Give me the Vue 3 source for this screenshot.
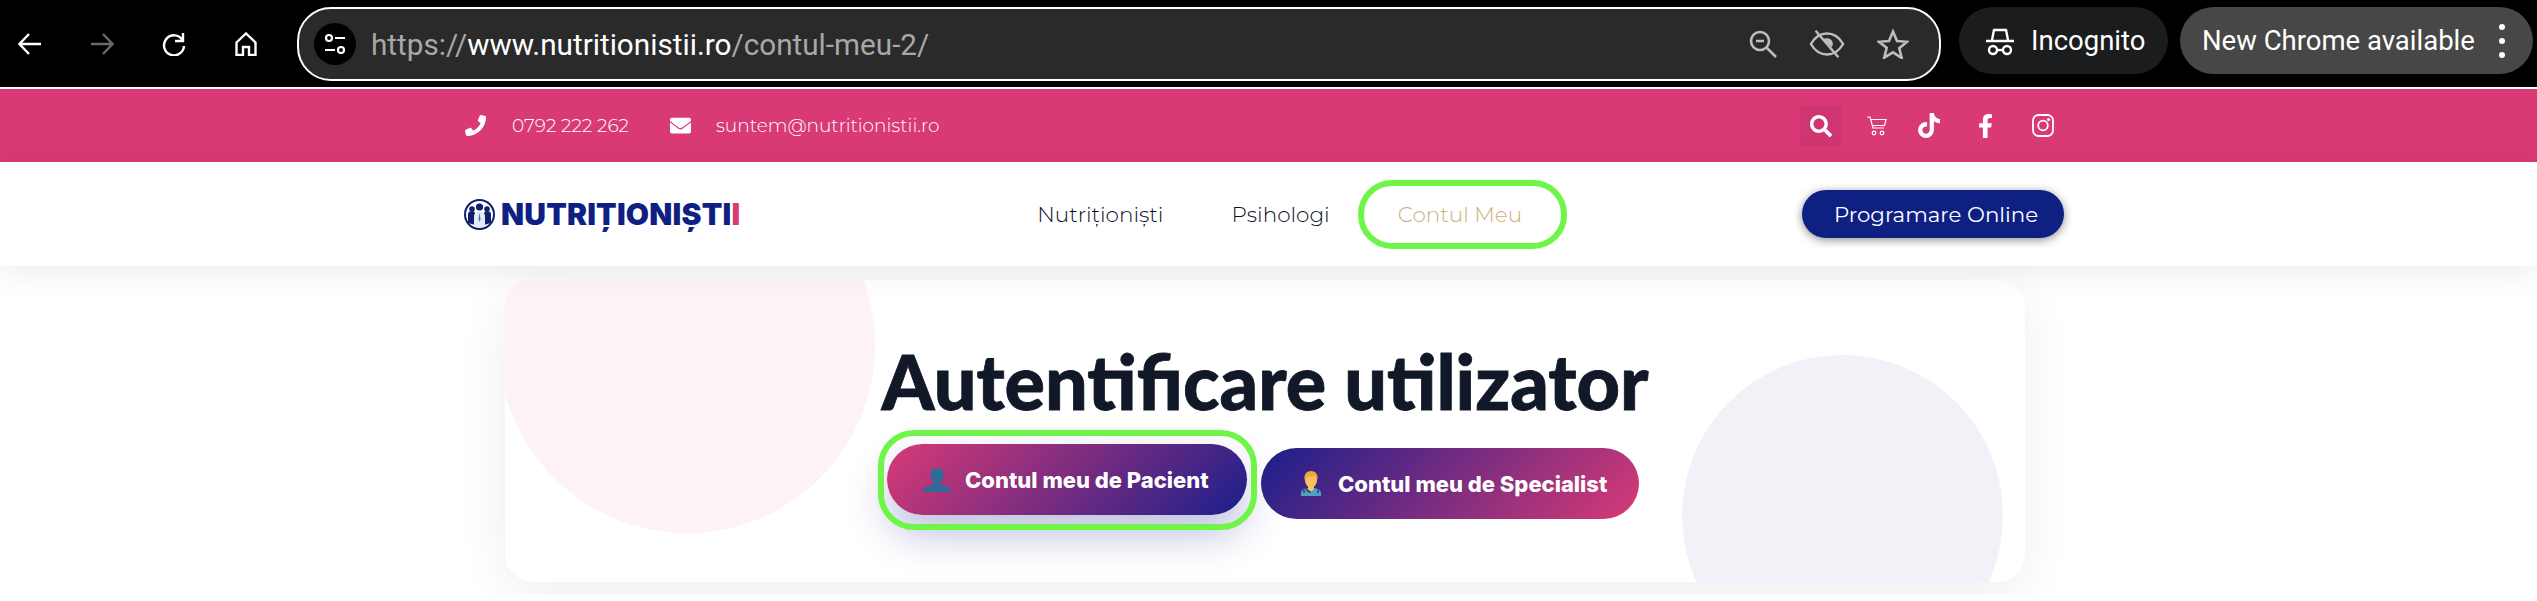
<script setup>
const urlHost = 'www.nutritionistii.ro'
const navLinks = ['Nutriționiști', 'Psihologi']
</script>

<template>
  <div class="page">
    <header class="browser">
      <div class="browser-nav">
        <svg class="bi" viewBox="0 0 24 24"><path d="M23 12H2M11 2 1.500 12 11 22" /></svg>
        <svg class="bi dim" viewBox="0 0 24 24"><path d="M1 12h21M13 2l9.500 10L13 22" /></svg>
        <svg class="bi" viewBox="0 0 24 24"><path d="M20.500 8A10 10 0 1 0 22 14M21 1v8h-8" /></svg>
        <svg class="bi" viewBox="0 0 24 24"><path d="M2.500 10.500 12 1.500l9.500 9V23H15v-8H9v8H2.500z" /></svg>
      </div>
      <div class="omnibox">
        <span class="site-btn">
          <svg width="24" height="24" viewBox="0 0 24 24" fill="none" stroke="#fff" stroke-width="2.200">
            <circle cx="6" cy="6" r="3" /><path d="M12 6h10M2 18h10" /><circle cx="18" cy="18" r="3" />
          </svg>
        </span>
        <span class="url">https://<b>{{ urlHost }}</b>/contul-meu-2/</span>
        <span class="omni-icons">
          <svg width="28" height="28" viewBox="0 0 28 28"><circle cx="11" cy="11" r="9" /><path d="M7 11h8M17.500 17.500 27 27" /></svg>
          <svg width="36" height="30" viewBox="0 0 38 30"><path d="M2 15c4-7 10-11 17-11s13 4 17 11c-4 7-10 11-17 11S6 22 2 15zM7 1l24 28" /><path class="eye-fill" d="M19 9a6 6 0 0 1 5 9.500L15 10c1-.7 2.500-1 4-1z" /></svg>
          <svg width="32" height="30" viewBox="0 0 32 30"><path d="m16 2.500 4 9.500 10 .8-7.700 6.500 2.400 9.700L16 23.300l-8.700 5.200 2.400-9.700L2 12.800l10-.8z" /></svg>
        </span>
      </div>
      <div class="chip incognito">
        <svg width="30" height="30" viewBox="0 0 30 30" fill="none" stroke="#fff" stroke-width="2.400">
          <path d="M1 15h28M7 14l2-10h12l2 10" /><circle cx="8" cy="24" r="4" /><circle cx="22" cy="24" r="4" /><path d="M12 24h6" />
        </svg>
        <span>Incognito</span>
      </div>
      <div class="chip update">
        <span>New Chrome available</span>
        <span class="dots"><i></i><i></i><i></i></span>
      </div>
    </header>

    <div class="topbar">
      <div class="wrap topbar-in">
        <div class="contact">
          <svg class="ci" viewBox="0 0 512 512"><path d="M493.400 24.600l-104-24c-11.300-2.600-22.900 3.300-27.500 13.900l-48 112c-4.200 9.800-1.400 21.300 6.900 28l60.600 49.600c-36 76.700-98.900 140.500-177.200 177.200l-49.600-60.600c-6.800-8.300-18.200-11.100-28-6.900l-112 48C3.900 366.500-2 378.100.6 389.400l24 104C27.100 504.200 36.700 512 48 512c256.100 0 464-207.500 464-464 0-11.200-7.700-20.900-18.600-23.400z" /></svg>
          <span class="phone">0792 222 262</span>
          <svg class="ci" viewBox="0 0 512 512"><path d="M502.300 190.800c3.900-3.100 9.700-.2 9.700 4.700V400c0 26.500-21.500 48-48 48H48c-26.500 0-48-21.500-48-48V195.600c0-5 5.700-7.800 9.700-4.700 22.400 17.400 52.100 39.500 154.100 113.600 21.100 15.400 56.700 47.800 92.200 47.600 35.700.3 72-32.800 92.300-47.600 102-74.100 131.600-96.300 154-113.700zM256 320c23.200.4 56.600-29.200 73.400-41.400 132.700-96.300 142.800-104.700 173.400-128.700 5.800-4.500 9.200-11.500 9.200-18.900v-19c0-26.500-21.500-48-48-48H48C21.500 64 0 85.500 0 112v19c0 7.400 3.400 14.300 9.200 18.900 30.600 23.900 40.700 32.400 173.400 128.700 16.800 12.200 50.200 41.800 73.400 41.400z" /></svg>
          <span class="mail">suntem@nutritionistii.ro</span>
        </div>
        <div class="socials">
          <span class="search">
            <svg width="22" height="22" viewBox="0 0 512 512" fill="#fff"><path d="M505 442.700L405.300 343c-4.500-4.500-10.600-7-17-7H372c27.600-35.300 44-79.700 44-128C416 93.100 322.900 0 208 0S0 93.100 0 208s93.100 208 208 208c48.300 0 92.700-16.400 128-44v16.300c0 6.400 2.500 12.500 7 17l99.700 99.700c9.400 9.400 24.600 9.400 33.900 0l28.300-28.300c9.400-9.400 9.400-24.600.1-34zM208 336c-70.700 0-128-57.200-128-128 0-70.700 57.200-128 128-128 70.700 0 128 57.200 128 128 0 70.700-57.200 128-128 128z" /></svg>
          </span>
          <svg class="cart" width="20" height="20" viewBox="0 0 20 20" fill="none" stroke="#fff" stroke-width="1.200">
            <path d="M0 1h3l3 11h11M4 3.500h15l-1.500 6H5.500" /><circle cx="7" cy="17" r="1.800" /><circle cx="15" cy="17" r="1.800" />
          </svg>
          <svg class="tiktok" width="22" height="25" viewBox="0 0 448 512" fill="#fff"><path d="M448 209.910a210.060 210.060 0 0 1-122.770-39.250V349.380A162.550 162.550 0 1 1 185 188.310V278.200a74.620 74.620 0 1 0 52.230 71.180V0l88 0a121.180 121.180 0 0 0 1.860 22.170h0A122.180 122.180 0 0 0 381 102.390a121.430 121.430 0 0 0 67 20.140Z" /></svg>
          <svg class="fb" width="15" height="24" viewBox="0 0 320 512" fill="#fff"><path d="M279.140 288l14.220-92.660h-88.910v-60.130c0-25.350 12.420-50.060 52.240-50.060h40.420V6.260S260.430 0 225.360 0c-73.220 0-121.080 44.380-121.080 124.720v70.620H22.890V288h81.390v224h100.170V288z" /></svg>
          <svg class="insta" width="22" height="23" viewBox="0 0 22 23" fill="none" stroke="#fff" stroke-width="1.800">
            <rect x="1" y="1" width="20" height="21" rx="5.500" /><circle cx="11" cy="11.500" r="4.800" /><circle cx="16.500" cy="5.500" r=".6" fill="#fff" />
          </svg>
        </div>
      </div>
    </div>

    <div class="mainbar">
      <div class="wrap mainbar-in">
        <div class="logo">
          <svg width="31" height="31" viewBox="0 0 31 31">
            <circle cx="15.500" cy="15.500" r="14.500" fill="#fff" stroke="#101f6e" stroke-width="2" />
            <g fill="#101f6e">
              <circle cx="8" cy="10" r="2.800" /><circle cx="23" cy="10" r="2.800" />
              <path d="M4 24V15c0-2 2-3 4-3s3 1 3 3v11zM20 26V15c0-2 1-3 3-3s4 1 4 3v9z" />
              <circle cx="15.500" cy="8" r="3.600" />
            </g>
            <path d="M10 28V17c0-2 2-4 5.500-4s5.500 2 5.500 4v11z" fill="#e6ecf5" />
            <path d="M15.500 13.500 14.500 20l1 3 1-3z" fill="#2a7fd0" />
          </svg>
          <span class="logo-text">NUTRIȚIONIȘTI<em>I</em></span>
        </div>
        <nav class="links">
          <a v-for="link in navLinks" :key="link">{{ link }}</a>
          <a class="current">Contul Meu</a>
        </nav>
        <a class="cta">Programare Online</a>
      </div>
    </div>

    <main class="content">
      <section class="card">
        <span class="blob pink"></span>
        <span class="blob grey"></span>
        <h1>Autentificare utilizator</h1>
        <div class="actions">
          <a class="btn patient">
            <svg width="28" height="24" viewBox="0 0 28 24" fill="#33689a">
              <path d="M14 0c4 0 6.500 2.500 6.500 6.500 0 3-1 5.500-3 7.500v2c2 1.500 10 2.500 10.500 6.500V24H0v-1.500C.5 18.500 8.500 17.500 10.500 16v-2c-2-2-3-4.500-3-7.500C7.500 2.500 10 0 14 0z" />
            </svg>
            Contul meu de Pacient
            <span class="mark"></span>
          </a>
          <a class="btn specialist">
            <svg width="24" height="25" viewBox="0 0 24 25">
              <path d="M2 25v-3c0-3 4-5 10-5s10 2 10 5v3z" fill="#4f9ec4" />
              <path d="M9 15h6v3l-3 3-3-3z" fill="#f6c667" />
              <ellipse cx="12" cy="9" rx="6" ry="7.500" fill="#f8c35c" />
              <path d="M5.500 9C4.500 3 8 0 12 0s7.500 3 6.500 9c-.5-2-1.500-3.500-3-4-2 1-5 1-6.500.5C7 6 6 7.500 5.500 9z" fill="#f0a63a" />
              <path d="M5 19v3M19 19v3M7 17c1 3 3 4 5 4" fill="none" stroke="#1f4a63" stroke-width="1.500" />
            </svg>
            Contul meu de Specialist
          </a>
        </div>
      </section>
    </main>
  </div>
</template>

<style scoped>
.page {
  width: 2537px;
  height: 601px;
  overflow: hidden;
  background: #fff;
}

.browser {
  height: 87px;
  padding: 7px 4px 6px 0;
  box-sizing: border-box;
  background: #000;
  display: flex;
  font-family: Roboto, "Liberation Sans", sans-serif;
}

.browser-nav {
  display: flex;
  align-items: center;
  gap: 48px;
  padding-left: 18px;
  margin-right: 39px;
}

.bi {
  width: 24px;
  height: 24px;
  fill: none;
  stroke: #fff;
  stroke-width: 2.4;
}

.bi.dim {
  stroke: #6a6a6a;
}

.omnibox {
  flex: 1;
  display: flex;
  align-items: center;
  background: #2a2a2a;
  border: 2px solid #fff;
  border-radius: 34px;
  padding: 0 30px 0 15px;
  color: #a8a8a8;
}

.site-btn {
  width: 42px;
  height: 42px;
  border-radius: 50%;
  background: #000;
  display: flex;
  align-items: center;
  justify-content: center;
}

.url {
  margin-left: 15px;
  font-size: 29.7px;
}

.url b {
  font-weight: 400;
  color: #fff;
}

.omni-icons {
  margin-left: auto;
  display: flex;
  align-items: center;
  gap: 32px;
}

.omni-icons svg {
  fill: none;
  stroke: #bdbdbd;
  stroke-width: 2.6;
}

.omni-icons .eye-fill {
  fill: #bdbdbd;
  stroke: none;
}

.chip {
  height: 67px;
  border-radius: 34px;
  display: flex;
  align-items: center;
  color: #fff;
  font-size: 27.500px;
}

.incognito {
  width: 209px;
  margin-left: 18px;
  padding-left: 26px;
  gap: 16px;
  box-sizing: border-box;
  background: #1b1c1e;
}

.update {
  width: 353px;
  margin-left: 12px;
  padding-left: 22px;
  box-sizing: border-box;
  background: #474747;
}

.dots {
  margin-left: 24px;
  display: flex;
  flex-direction: column;
  gap: 8px;
}

.dots i {
  width: 6px;
  height: 6px;
  border-radius: 50%;
  background: #fff;
}

.topbar {
  margin-top: 2px;
  height: 73px;
  background: #d93a76;
  font-family: Montserrat, Inter, "Noto Sans", sans-serif;
  font-weight: 300;
  color: #fff;
}

.wrap {
  width: 1600px;
  margin-left: 464px;
}

.topbar-in {
  height: 100%;
  display: flex;
  align-items: center;
  justify-content: space-between;
}

.contact {
  display: flex;
  align-items: center;
  font-size: 18.500px;
  padding-left: 1px;
}

.ci {
  width: 21px;
  height: 21px;
  fill: #fff;
}

.phone {
  margin: 0 41px 0 26px;
}

.mail {
  margin-left: 25px;
}

.socials {
  display: flex;
  align-items: center;
  margin-right: 10px;
}

.search {
  width: 42px;
  height: 41px;
  border-radius: 4px;
  background: #cf3570;
  display: flex;
  align-items: center;
  justify-content: center;
}

.cart {
  margin-left: 25px;
}

.tiktok {
  margin-left: 31px;
}

.fb {
  margin-left: 38px;
}

.insta {
  margin-left: 39px;
}

.mainbar {
  position: relative;
  z-index: 2;
  height: 104px;
  background: #fff;
  box-shadow: 0 4px 30px rgba(0, 0, 0, 0.09);
  font-family: Montserrat, Inter, "Noto Sans", sans-serif;
}

.mainbar-in {
  height: 100%;
  display: flex;
  align-items: center;
}

.logo {
  display: flex;
  align-items: center;
  gap: 6px;
}

.logo-text {
  font-family: Inter, "Liberation Sans", sans-serif;
  font-weight: 900;
  font-size: 30px;
  letter-spacing: 0.2px;
  color: #0f1f82;
}

.logo-text em {
  font-style: normal;
  color: #d93a76;
}

.links {
  margin-left: 297px;
  display: flex;
  align-items: center;
  font-size: 21.500px;
  font-weight: 300;
  color: #0c0e2c;
}

.links a + a {
  margin-left: 68px;
}

.links .current {
  margin-left: 28px !important;
  height: 69px;
  padding: 0 39px 0 34px;
  display: flex;
  align-items: center;
  box-sizing: border-box;
  border: 6px solid #6ff54a;
  border-radius: 34px;
  color: #cfae7a;
}

.cta {
  margin-left: auto;
  height: 48px;
  padding: 0 26px 0 32px;
  display: flex;
  align-items: center;
  border-radius: 24px;
  background: #0f2083;
  color: #fff;
  font-size: 21.300px;
  font-weight: 400;
  box-shadow: 0 2px 10px rgba(0, 0, 0, 0.45);
}

.content {
  position: relative;
  height: 329px;
  padding-top: 14px;
  box-sizing: border-box;
  overflow: hidden;
  background: #fff;
}

.content::before {
  content: "";
  position: absolute;
  left: 505px;
  top: 14px;
  width: 1520px;
  height: 302px;
  border-radius: 28px;
  box-shadow: 0 10px 50px rgba(0, 0, 0, 0.07);
}

.card {
  position: relative;
  overflow: hidden;
  width: 1520px;
  height: 302px;
  margin-left: 505px;
  border-radius: 28px;
  background: #fff;
  display: flex;
  flex-direction: column;
  align-items: center;
  box-sizing: border-box;
  padding-top: 56px;
}

.blob {
  position: absolute;
  border-radius: 50%;
}

.blob.pink {
  left: -6px;
  top: -123px;
  width: 376px;
  height: 376px;
  background: #fdf2f6;
}

.blob.grey {
  left: 1177px;
  top: 75px;
  width: 321px;
  height: 321px;
  background: #f1f2f8;
}

h1 {
  position: relative;
  margin: 0;
  font-family: Lato, Inter, sans-serif;
  font-size: 75.500px;
  font-weight: 900;
  line-height: 90px;
  color: #111827;
  -webkit-text-stroke: 0.8px #111827;
}

.actions {
  position: relative;
  display: flex;
  gap: 14px;
  margin: 22px 4px 0 0;
}

.btn {
  position: relative;
  height: 71px;
  display: flex;
  align-items: center;
  border-radius: 36px;
  box-sizing: border-box;
  color: #fff;
  font-family: Inter, "Liberation Sans", sans-serif;
  font-size: 22px;
  font-weight: 800;
}

.patient {
  width: 360px;
  padding-left: 36px;
  gap: 14px;
  transform: translateY(-4px);
  background: linear-gradient(135deg, #d93a76, #1a1f8a);
  box-shadow: 0 20px 40px rgba(26, 31, 138, 0.28);
}

.specialist {
  width: 378px;
  padding-left: 38px;
  gap: 15px;
  background: linear-gradient(135deg, #1a1f8a, #d93a76);
}

.mark {
  position: absolute;
  left: -9px;
  top: -14px;
  width: 379px;
  height: 100px;
  box-sizing: border-box;
  border: 6px solid #6ff54a;
  border-radius: 36px;
}
</style>

<style>
body {
  background: #fff;
}
</style>
